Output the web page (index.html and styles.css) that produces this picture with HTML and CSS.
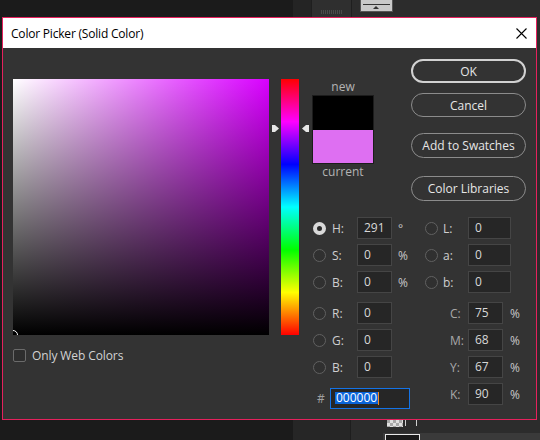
FILE: index.html
```html
<!DOCTYPE html>
<html>
<head>
<meta charset="utf-8">
<title>Color Picker</title>
<link rel="stylesheet" href="styles.css">
</head>
<body>
<div class="app">
  <div class="bg-panel">
    <div class="bg-top-a"></div>
    <div class="bg-top-tab"><span class="bg-dots"></span></div>
    <div class="bg-top-icon"><span class="bg-icon-line"></span><span class="bg-icon-tri"></span></div>
    <div class="bg-bot-a"></div>
    <div class="bg-checker"></div>
    <div class="bg-bracket"></div>
    <div class="bg-bot-strip"><span class="bg-bot-box"></span></div>
  </div>

  <div class="dialog">
    <div class="titlebar">
      <span class="title">Color Picker (Solid Color)</span>
      <svg class="close" width="11" height="11" viewBox="0 0 11 11"><path d="M0.5 0.5 L10.5 10.5 M10.5 0.5 L0.5 10.5" stroke="#000" stroke-width="1.1" fill="none"/></svg>
    </div>
    <div class="body">
      <div class="col-field">
        <div class="field"><span class="marker"></span></div>
        <div class="webcolors"><span class="checkbox"></span><span class="webcolors-text">Only Web Colors</span></div>
      </div>
      <div class="hue-wrap">
        <div class="hue"></div>
        <svg class="arrow arrow-l" width="7" height="7" viewBox="0 0 7 7"><path d="M0 0 H3 L7 3.5 L3 7 H0 Z" fill="#e6e6e6"/></svg>
        <svg class="arrow arrow-r" width="7" height="7" viewBox="0 0 7 7"><path d="M7 0 H4 L0 3.5 L4 7 H7 Z" fill="#e6e6e6"/></svg>
      </div>
      <div class="controls">
        <div class="top">
          <div class="swatch-col">
            <div class="sw-label">new</div>
            <div class="swatch"><div class="sw-new"></div><div class="sw-cur"></div></div>
            <div class="sw-label">current</div>
          </div>
          <div class="buttons">
            <div class="btn btn-ok">OK</div>
            <div class="btn btn-cancel">Cancel</div>
            <div class="btn btn-add">Add to Swatches</div>
            <div class="btn btn-lib">Color Libraries</div>
          </div>
        </div>

        <div class="grid1">
          <span class="radio on"></span><span class="lbl">H:</span><span class="inp">291</span><span class="unit">°</span>
          <span class="radio"></span><span class="lbl">L:</span><span class="inp">0</span>

          <span class="radio"></span><span class="lbl">S:</span><span class="inp">0</span><span class="unit">%</span>
          <span class="radio"></span><span class="lbl">a:</span><span class="inp">0</span>

          <span class="radio"></span><span class="lbl">B:</span><span class="inp">0</span><span class="unit">%</span>
          <span class="radio"></span><span class="lbl">b:</span><span class="inp">0</span>
        </div>

        <div class="grid2">
          <span class="radio"></span><span class="lbl">R:</span><span class="inp">0</span><span class="sp"></span>
          <span class="lbl dim">C:</span><span class="inp">75</span><span class="unit u2">%</span>

          <span class="radio"></span><span class="lbl">G:</span><span class="inp">0</span><span class="sp"></span>
          <span class="lbl dim">M:</span><span class="inp">68</span><span class="unit u2">%</span>

          <span class="radio"></span><span class="lbl">B:</span><span class="inp">0</span><span class="sp"></span>
          <span class="lbl dim">Y:</span><span class="inp">67</span><span class="unit u2">%</span>

          <span class="hexcell"><span class="hash">#</span><span class="hex"><span class="hexsel">000000</span><span class="caret"></span></span></span>
          <span class="lbl dim">K:</span><span class="inp">90</span><span class="unit u2">%</span>
        </div>
      </div>
    </div>
  </div>
</div>
</body>
</html>
```

FILE: styles.css
```css
html, body {
  margin: 0;
  padding: 0;
}
body {
  width: 540px;
  height: 440px;
  overflow: hidden;
  background: #1b1b1b;
  font-family: "Open Sans", "Noto Sans", sans-serif;
  font-size: 12px;
}
.app {
  position: relative;
  width: 540px;
  height: 440px;
}

/* background application (behind the dialog) */
.bg-panel {
  position: absolute;
  left: 293px;
  top: 0;
  right: 0;
  bottom: 0;
  background: #2c2c2c;
}
.bg-top-a {
  position: absolute;
  left: 0;
  top: 0;
  width: 18px;
  height: 17px;
  background: #242424;
}
.bg-top-tab {
  position: absolute;
  left: 18px;
  top: 0;
  width: 39px;
  height: 17px;
  background: #2f2f2f;
  border-left: 1px solid #1f1f1f;
  border-right: 1px solid #1f1f1f;
}
.bg-dots {
  position: absolute;
  left: 9px;
  top: 10px;
  width: 22px;
  height: 4px;
  background: repeating-linear-gradient(to right, #4a4a4a 0 1px, transparent 1px 2px);
}
.bg-top-icon {
  position: absolute;
  left: 67px;
  top: 0;
  width: 31px;
  height: 11px;
  background: #c9c9c9;
  border: 1px solid #555;
  border-top: none;
}
.bg-icon-line {
  position: absolute;
  left: 2px;
  right: 2px;
  top: 4px;
  height: 1px;
  background: #333;
}
.bg-icon-tri {
  position: absolute;
  left: 12px;
  top: 6px;
  width: 0;
  height: 0;
  border-left: 3px solid transparent;
  border-right: 3px solid transparent;
  border-bottom: 3px solid #333;
}
.bg-bot-a {
  position: absolute;
  left: 0;
  top: 420px;
  width: 57px;
  height: 20px;
  background: #262626;
  border-right: 1px solid #1e1e1e;
}
.bg-checker {
  position: absolute;
  left: 94px;
  top: 420px;
  width: 16px;
  height: 7px;
  background: repeating-conic-gradient(#e0e0e0 0 25%, #a8a8a8 0 50%) 0 0 / 6px 6px;
}
.bg-bracket {
  position: absolute;
  left: 112px;
  top: 419px;
  width: 10px;
  height: 7px;
  border: 1px solid #d0d0d0;
  border-top: none;
  border-bottom: none;
}
.bg-bot-strip {
  position: absolute;
  left: 90px;
  top: 433px;
  right: 0;
  height: 7px;
  background: #3a3a3a;
}
.bg-bot-box {
  position: absolute;
  left: 2px;
  top: 1px;
  width: 33px;
  height: 10px;
  border: 1px solid #e8e8e8;
  background: #1a1a1a;
}

/* dialog window */
.dialog {
  position: absolute;
  left: 2px;
  top: 17px;
  width: 533px;
  height: 401px;
  border: 1px solid #e5215d;
  background: #333333;
  display: flex;
  flex-direction: column;
}
.titlebar {
  height: 30px;
  background: #ffffff;
  display: flex;
  align-items: center;
  padding: 0 9px 0 8px;
  flex: none;
}
.title {
  color: #000;
  font-size: 12px;
  letter-spacing: -0.2px;
  flex: 1;
}
.close {
  display: block;
}
.body {
  display: flex;
  align-items: flex-start;
  padding: 11px 0 0 10px;
}
.col-field {
  margin-top: 20px;
  width: 256px;
}
.field {
  position: relative;
  width: 256px;
  height: 256px;
  overflow: hidden;
  background:
    linear-gradient(to top, #000 0%, rgba(0,0,0,0) 100%),
    linear-gradient(to right, #ffffff 0%, rgb(217,0,255) 100%);
}
.marker {
  position: absolute;
  left: -5px;
  bottom: -5px;
  width: 8px;
  height: 8px;
  border: 1px solid #fff;
  border-radius: 50%;
}
.webcolors {
  margin-top: 14px;
  display: flex;
  align-items: center;
  height: 13px;
}
.checkbox {
  width: 11px;
  height: 11px;
  border: 1px solid #6b6b6b;
  border-radius: 2px;
  background: #2e2e2e;
  flex: none;
}
.webcolors-text {
  margin-left: 6px;
  color: #d2d2d2;
  letter-spacing: -0.1px;
}
.hue-wrap {
  position: relative;
  margin-top: 20px;
  width: 31px;
  padding-left: 12px;
  height: 256px;
}
.hue {
  width: 18px;
  height: 256px;
  background: linear-gradient(to bottom, #ff0000 0%, #ff00ff 16.67%, #0000ff 33.33%, #00ffff 50%, #00ff00 66.67%, #ffff00 83.33%, #ff0000 100%);
}
.arrow {
  position: absolute;
  top: 46px;
  display: block;
}
.arrow-l { left: 3px; }
.arrow-r { left: 33px; }

.controls {
  width: 214px;
}
.top {
  display: flex;
  align-items: flex-start;
}
.swatch-col {
  margin-top: 20px;
  width: 62px;
  display: flex;
  flex-direction: column;
  align-items: center;
}
.sw-label {
  height: 16px;
  line-height: 16px;
  color: #b4b4b4;
}
.swatch {
  width: 60px;
  height: 67px;
  border: 1px solid #1c1c1c;
  display: flex;
  flex-direction: column;
}
.sw-new { height: 34px; background: #000; }
.sw-cur { flex: 1; background: #de6ff2; }
.buttons {
  margin-left: auto;
  width: 115px;
  display: flex;
  flex-direction: column;
}
.btn {
  box-sizing: border-box;
  height: 25px;
  border: 1px solid #8c8c8c;
  border-radius: 13px;
  color: #e6e6e6;
  display: flex;
  align-items: center;
  justify-content: center;
}
.btn-ok {
  height: 24px;
  border: 2px solid #d2d2d2;
}
.btn-cancel { height: 24px; margin-top: 10px; }
.btn-add { margin-top: 16px; }
.btn-lib { margin-top: 18px; }

.grid1, .grid2 {
  display: grid;
  grid-auto-rows: 22px;
  row-gap: 5px;
  align-items: center;
}
.grid1 {
  margin-top: 16px;
  grid-template-columns: 20px 25px 35px 32px 19px 25px 43px;
}
.grid2 {
  margin-top: 9px;
  grid-template-columns: 20px 25px 35px 58px 18px 35px 23px;
}
.radio {
  box-sizing: border-box;
  width: 13px;
  height: 13px;
  margin-left: 1px;
  border: 1px solid #616161;
  border-radius: 50%;
  background: #303030;
}
.radio.on {
  border: 4px solid #d9d9d9;
  background: #2a2a2a;
}
.lbl {
  color: #cfcfcf;
}
.lbl.dim {
  color: #a8a8a8;
}
.inp {
  box-sizing: border-box;
  height: 22px;
  border: 1px solid #454545;
  background: #262626;
  color: #d8d8d8;
  padding-left: 6px;
  line-height: 20px;
}
.unit {
  color: #c8c8c8;
  padding-left: 6px;
}
.u2 { padding-left: 7px; }
.hexcell {
  grid-column: 1 / span 4;
  display: flex;
  align-items: center;
  margin-top: 8px;
}
.hash {
  width: 13px;
  padding-left: 5px;
  color: #a0a0a0;
}
.hex {
  box-sizing: border-box;
  width: 80px;
  height: 21px;
  border: 1px solid #1473e6;
  background: #262626;
  display: flex;
  align-items: center;
  padding-left: 4px;
}
.hexsel {
  background: #0a64d8;
  color: #ffffff;
  height: 12px;
  line-height: 12px;
  padding: 0 1px;
}
.caret {
  width: 1px;
  height: 13px;
  background: #f08a24;
}
```
